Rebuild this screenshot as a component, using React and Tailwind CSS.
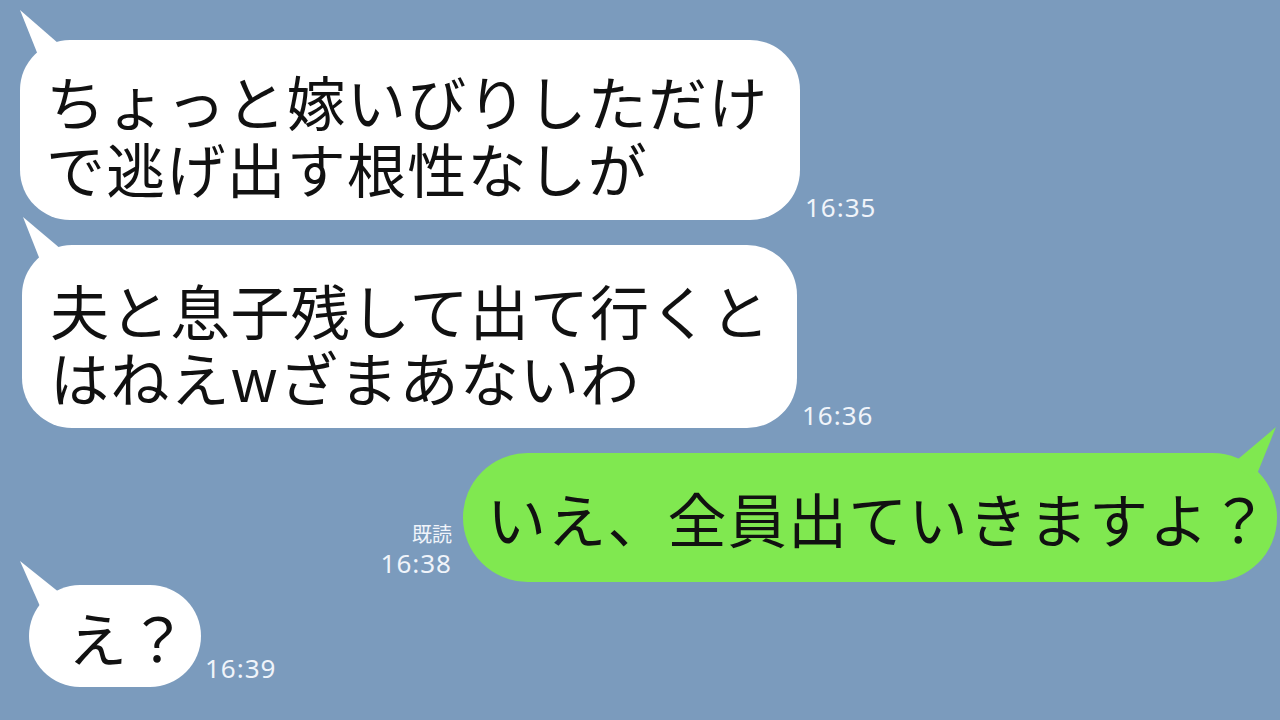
import React from "react";

const jp = { fontFamily: '"Noto Sans CJK JP", "Noto Sans", sans-serif' };
const num = { fontFamily: '"Noto Sans", "Noto Sans CJK JP", sans-serif' };

// Speech-bubble tail drawn from a bubble corner
function Tail({ points, color, side = "left" }) {
  return (
    <svg
      className={`absolute top-0 overflow-visible ${side === "left" ? "left-0" : "right-0"}`}
      width="1"
      height="1"
      viewBox="0 0 1 1"
    >
      <polygon points={points} fill={color} />
    </svg>
  );
}

function Time({ children, className = "" }) {
  return (
    <span
      style={num}
      className={`text-[26px] leading-[26px] tracking-[1px] text-[#f0f4fa] ${className}`}
    >
      {children}
    </span>
  );
}

const msgText =
  "relative text-[59px] leading-[67px] tracking-[1.2px] font-normal text-[#111]";

export default function App() {
  return (
    <div className="w-[1280px] h-[720px] bg-[#7b9bbd] overflow-hidden flex flex-col">
      {/* message 1 */}
      <div className="flex items-end pl-[20px] mt-[40px]">
        <div className="relative w-[780px] h-[180px] bg-white rounded-[50px]">
          <Tail points="0,-30 46,10 22,25" color="#ffffff" />
          <p style={jp} className={`${msgText} pl-[26px] pt-[27px]`}>
            ちょっと嫁いびりしただけ
            <br />
            で逃げ出す根性なしが
          </p>
        </div>
        <Time className="ml-[5px]">16:35</Time>
      </div>

      {/* message 2 */}
      <div className="flex items-end pl-[22px] mt-[25px]">
        <div className="relative w-[775px] h-[183px] bg-white rounded-[50px]">
          <Tail points="1,-28 46,10 22,25" color="#ffffff" />
          <p style={jp} className={`${msgText} pl-[28px] pt-[31px]`}>
            夫と息子残して出て行くと
            <br />
            はねえwざまあないわ
          </p>
        </div>
        <Time className="ml-[5px]">16:36</Time>
      </div>

      {/* my reply */}
      <div className="flex items-end justify-end pr-[3px] mt-[25px]">
        <div className="flex flex-col items-end mr-[11px] mb-[6px]">
          <span
            style={jp}
            className="text-[20px] leading-[20px] text-[#f0f4fa] mb-[6px]"
          >
            既読
          </span>
          <Time>16:38</Time>
        </div>
        <div className="relative w-[814px] h-[129px] bg-[#80e850] rounded-full flex items-center">
          <Tail points="0,-26 -45,12 -21,26" color="#80e850" side="right" />
          <p style={jp} className={`${msgText} pl-[24px] whitespace-nowrap`}>
            いえ、全員出ていきますよ？
          </p>
        </div>
      </div>

      {/* message 4 */}
      <div className="flex items-end pl-[29px] mt-[3px]">
        <div className="relative w-[172px] h-[102px] bg-white rounded-full flex items-center">
          <Tail points="-9,-24 36,12 14,28" color="#ffffff" />
          <p style={jp} className={`${msgText} pl-[39px] whitespace-nowrap`}>
            え？
          </p>
        </div>
        <Time className="ml-[4px] mb-[6px]">16:39</Time>
      </div>
    </div>
  );
}
